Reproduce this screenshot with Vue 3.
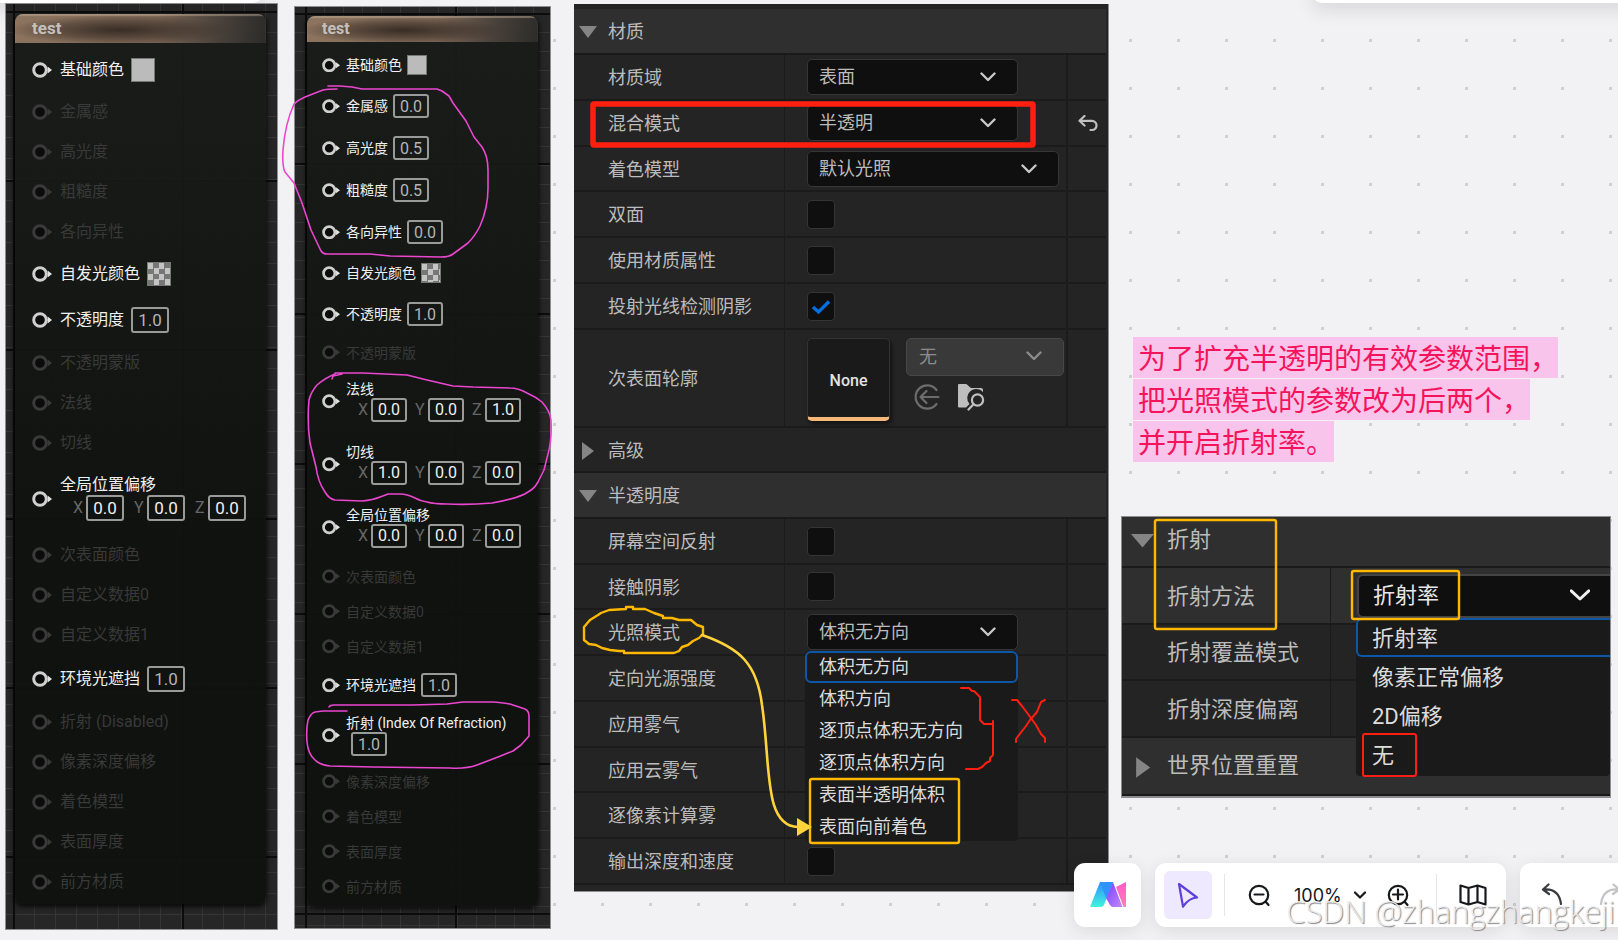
<script setup>
import { ref } from "vue";

const simpleNode = {
  id: "a",
  size: "large",
  title: "test",
  pins: [
    { label: "基础颜色", kind: "color", on: true },
    { label: "金属感" },
    { label: "高光度" },
    { label: "粗糙度" },
    { label: "各向异性" },
    { label: "自发光颜色", kind: "checker", on: true },
    { label: "不透明度", kind: "value", value: "1.0", on: true },
    { label: "不透明蒙版" },
    { label: "法线" },
    { label: "切线" },
    { label: "全局位置偏移", kind: "vector", value: ["0.0", "0.0", "0.0"], on: true },
    { label: "次表面颜色" },
    { label: "自定义数据0" },
    { label: "自定义数据1" },
    { label: "环境光遮挡", kind: "value", value: "1.0", on: true },
    { label: "折射 (Disabled)" },
    { label: "像素深度偏移" },
    { label: "着色模型" },
    { label: "表面厚度" },
    { label: "前方材质" },
  ],
};

const forwardNode = {
  id: "b",
  size: "small",
  title: "test",
  pins: [
    { label: "基础颜色", kind: "color", on: true },
    { label: "金属感", kind: "value", value: "0.0", on: true },
    { label: "高光度", kind: "value", value: "0.5", on: true },
    { label: "粗糙度", kind: "value", value: "0.5", on: true },
    { label: "各向异性", kind: "value", value: "0.0", on: true },
    { label: "自发光颜色", kind: "checker", on: true },
    { label: "不透明度", kind: "value", value: "1.0", on: true },
    { label: "不透明蒙版" },
    { label: "法线", kind: "vector", value: ["0.0", "0.0", "1.0"], on: true },
    { label: "切线", kind: "vector", value: ["1.0", "0.0", "0.0"], on: true },
    { label: "全局位置偏移", kind: "vector", value: ["0.0", "0.0", "0.0"], on: true },
    { label: "次表面颜色" },
    { label: "自定义数据0" },
    { label: "自定义数据1" },
    { label: "环境光遮挡", kind: "value", value: "1.0", on: true },
    { label: "折射 (Index Of Refraction)", kind: "stacked", value: "1.0", on: true },
    { label: "像素深度偏移" },
    { label: "着色模型" },
    { label: "表面厚度" },
    { label: "前方材质" },
  ],
};

const nodes = [simpleNode, forwardNode];
const axes = ["X", "Y", "Z"];

const materialRows = [
  { id: "domain", label: "材质域", select: "表面" },
  { id: "blend", label: "混合模式", select: "半透明", reset: true },
  { id: "shading", label: "着色模型", select: "默认光照", wide: true },
  { id: "twosided", label: "双面", check: true },
  { id: "attributes", label: "使用材质属性", check: true },
  { id: "rayshadow", label: "投射光线检测阴影", check: true, checked: true },
];

const lightingOptions = [
  "体积无方向",
  "体积方向",
  "逐顶点体积无方向",
  "逐顶点体积方向",
  "表面半透明体积",
  "表面向前着色",
];

const translucencyRows = [
  { id: "ssr", label: "屏幕空间反射", check: true },
  { id: "contact", label: "接触阴影", check: true },
  { id: "lighting", label: "光照模式", select: "体积无方向", options: lightingOptions },
  { id: "directional", label: "定向光源强度" },
  { id: "fog", label: "应用雾气" },
  { id: "cloudfog", label: "应用云雾气" },
  { id: "pixelfog", label: "逐像素计算雾" },
  { id: "velocity", label: "输出深度和速度", check: true },
];

const refractionOptions = ["折射率", "像素正常偏移", "2D偏移", "无"];

const noteLines = [
  "为了扩充半透明的有效参数范围，",
  "把光照模式的参数改为后两个，",
  "并开启折射率。",
];

const zoom = ref(100);
</script>

<template>
  <main class="canvas">
    <div class="sheet sheet--left"></div>
    <div class="sheet sheet--right"></div>

    <!-- Material graph nodes -->
    <section
      v-for="node in nodes"
      :key="node.id"
      class="graph"
      :class="`graph--${node.size}`"
    >
      <div class="node">
        <h2 class="node__title">{{ node.title }}</h2>
        <ul class="node__pins">
          <li
            v-for="(pin, i) in node.pins"
            :key="i"
            class="pin"
            :class="[{ 'pin--on': pin.on }, pin.kind ? `pin--${pin.kind}` : '']"
          >
            <svg class="pin__socket" viewBox="0 0 20 16">
              <circle cx="8" cy="8" r="6.3" />
              <path d="M15.6 4.6 L20 8 L15.6 11.4 Z" />
            </svg>
            <div class="pin__body">
              <label class="pin__label" :for="`${node.id}-${i}`">{{ pin.label }}</label>
              <button
                v-if="pin.kind === 'color' || pin.kind === 'checker'"
                :id="`${node.id}-${i}`"
                type="button"
                class="swatch"
                :class="{ 'swatch--checker': pin.kind === 'checker' }"
              ></button>
              <input
                v-else-if="pin.kind === 'value' || pin.kind === 'stacked'"
                :id="`${node.id}-${i}`"
                class="field"
                type="text"
                :value="pin.value"
              />
              <div v-else-if="pin.kind === 'vector'" class="vector">
                <label v-for="(v, n) in pin.value" :key="n" class="vector__axis">
                  <span>{{ axes[n] }}</span>
                  <input :id="n ? undefined : `${node.id}-${i}`" class="field" type="text" :value="v" />
                </label>
              </div>
            </div>
          </li>
        </ul>
      </div>
    </section>

    <!-- Details panel -->
    <section class="details">
      <button type="button" class="category">
        <svg class="arrow" viewBox="0 0 18 18"><path d="M0 3 H18 L9 15 Z" /></svg>
        <span>材质</span>
      </button>
      <div v-for="row in materialRows" :key="row.id" class="row">
        <label class="row__label" :for="row.id">{{ row.label }}</label>
        <div class="row__value">
          <span v-if="row.select" class="dropdown" :class="{ 'dropdown--wide': row.wide }">
            <select :id="row.id">
              <option>{{ row.select }}</option>
            </select>
            <svg class="chevron" viewBox="0 0 16 10"><path d="M1.5 1.5 L8 8 L14.5 1.5" /></svg>
          </span>
          <span v-else-if="row.check" class="check">
            <input :id="row.id" type="checkbox" :checked="row.checked" />
            <svg viewBox="0 0 20 16"><path d="M2 8 L7.5 13 L18 2.5" /></svg>
          </span>
        </div>
        <div class="row__reset">
          <button v-if="row.reset" type="button" class="icon-button" aria-label="重置">
            <svg width="20" height="17" viewBox="0 0 20 17">
              <path d="M6.5 1 L1.5 5.8 L6.5 10.5 M2 5.8 H14 A4.5 4.6 0 0 1 14 15 H12.5" />
            </svg>
          </button>
        </div>
      </div>

      <div class="row row--asset">
        <label class="row__label" for="profile">次表面轮廓</label>
        <div class="row__value asset">
          <div class="asset__thumb">None</div>
          <div class="asset__side">
            <span class="dropdown dropdown--off">
              <select id="profile" disabled>
                <option>无</option>
              </select>
              <svg class="chevron" viewBox="0 0 16 10"><path d="M1.5 1.5 L8 8 L14.5 1.5" /></svg>
            </span>
            <div class="asset__tools">
              <button type="button" class="icon-button" aria-label="使用">
                <svg class="asset__use" width="28" height="28" viewBox="0 0 28 28">
                  <path d="M23.5 7 A11.6 11.6 0 1 0 23.5 21 M8 14 H25.5 M13.5 8 L7.5 14 L13.5 20" />
                </svg>
              </button>
              <button type="button" class="icon-button" aria-label="浏览">
                <svg width="28" height="28" viewBox="0 0 28 28">
                  <path class="asset__folder" d="M1 2 Q1 1 2 1 H9 Q10 1 11 2.5 L14 5 H24 Q26 5 26 7 V9 A9 9 0 0 0 12.5 21 L9 24.5 H2 Q1 24.5 1 23.5 Z" />
                  <circle cx="20.5" cy="17" r="5.6" />
                  <path d="M16.5 21.2 L11.5 26.5" />
                </svg>
              </button>
            </div>
          </div>
        </div>
        <div class="row__reset"></div>
      </div>

      <button type="button" class="category category--plain">
        <svg class="arrow" viewBox="0 0 18 18"><path d="M3 0 L15 9 L3 18 Z" /></svg>
        <span>高级</span>
      </button>
      <button type="button" class="category">
        <svg class="arrow" viewBox="0 0 18 18"><path d="M0 3 H18 L9 15 Z" /></svg>
        <span>半透明度</span>
      </button>
      <div v-for="row in translucencyRows" :key="row.id" class="row">
        <label class="row__label" :for="row.id">{{ row.label }}</label>
        <div class="row__value">
          <span v-if="row.select" class="dropdown">
            <select :id="row.id">
              <option>{{ row.select }}</option>
            </select>
            <svg class="chevron" viewBox="0 0 16 10"><path d="M1.5 1.5 L8 8 L14.5 1.5" /></svg>
          </span>
          <span v-else-if="row.check" class="check">
            <input :id="row.id" type="checkbox" />
          </span>
          <ul v-if="row.options" class="menu" role="listbox">
            <li
              v-for="(option, n) in row.options"
              :key="option"
              role="option"
              :aria-selected="n === 0"
            >
              {{ option }}
            </li>
          </ul>
        </div>
        <div class="row__reset"></div>
      </div>
    </section>

    <!-- Note -->
    <p class="note">
      <span v-for="line in noteLines" :key="line">{{ line }}</span>
    </p>

    <!-- Refraction panel -->
    <section class="refraction">
      <button type="button" class="category">
        <svg class="arrow" viewBox="0 0 18 18"><path d="M0 4 H18 L9 14.5 Z" /></svg>
        <span>折射</span>
      </button>
      <div class="row row--hover">
        <label class="row__label" for="method">折射方法</label>
        <div class="row__value">
          <span class="dropdown">
            <select id="method">
              <option>折射率</option>
            </select>
            <svg class="chevron" viewBox="0 0 16 10"><path d="M1 1.5 L8 8 L15 1.5" /></svg>
          </span>
          <ul class="menu" role="listbox">
            <li
              v-for="(option, n) in refractionOptions"
              :key="option"
              role="option"
              :aria-selected="n === 0"
            >
              {{ option }}
            </li>
          </ul>
        </div>
      </div>
      <div class="row">
        <span class="row__label">折射覆盖模式</span>
        <div class="row__value"></div>
      </div>
      <div class="row">
        <span class="row__label">折射深度偏离</span>
        <div class="row__value"></div>
      </div>
      <button type="button" class="category category--closed">
        <svg class="arrow" viewBox="0 0 18 18"><path d="M4 1 L15 9 L4 17 Z" /></svg>
        <span>世界位置重置</span>
      </button>
    </section>

    <!-- Hand-drawn marks over the boards -->
    <svg class="marks" width="1618" height="940" viewBox="0 0 1618 940">
      <g class="marks__pink">
        <path d="M328 86 L340 86 L352 87 L362 89 H437 L442 91 L449 96 L453 103 L466 121 L474 137 L482 147 Q488 156 488 170 V188 Q488 208 480 226 Q475 236 468 243 L453 254 Q449 257 441 257 L390 256 L370 254 L327 254 Q323 254 321 251 L311 230 L302 203 L294 183 L285 172 Q282 166 283 150 Q285 124 294 104 Q298 100 305 97 L323 90 Q328 89 337 89" />
        <path d="M332 379 L333 376 L342 374 M335 373 L363 373 L407 375 L427 380 L453 386 L473 387 L510 388 Q518 388 527 393 Q536 397 542 402 Q550 411 551 420 Q552 440 548 454 L544 470 L538 482 Q534 489 528 492 Q520 498 492 503 Q470 505 447 504 Q434 504 427 502 Q420 501 415 498 Q407 494 400 494 H388 Q383 496 380 497 Q373 500 362 501 L335 500 Q329 499 325 492 Q318 482 316 467 L310 443 Q307 422 309 400 Q311 392 317 385 Q325 378 335 374" />
        <path d="M329 707 Q330 705 334 705 H413 L447 704 L463 702 H494 Q508 703 513 705 L525 709 Q529 711 529 716 V736 L521 745 L513 751 L498 757 L477 765 Q466 769 450 768 L373 767 L330 766 Q320 765 315 760 Q308 754 307 742 Q306 730 308 720 Q311 713 315 712 L323 711 H347" />
      </g>
      <rect class="marks__frame" x="593" y="104" width="440" height="41" rx="1" />
      <g class="marks__red">
        <path d="M961 688 H969 L972 691 H974 L980 697 V720 L984 724 H993 M993 721 V755 L990 758 V761 L986 763 L982 767 L978 769 H966" />
        <path d="M1012 700 H1017 L1022 706 L1028 714 L1036 725 L1041 734 L1045 738 V742 M1045 700 L1041 702 L1037 712 L1030 720 L1026 726 L1019 735 L1016 739 V742" />
        <rect x="1363" y="734" width="53" height="42" rx="2" />
      </g>
      <g class="marks__gold">
        <path d="M626 607 H633 V609 H645 L654 613 L663 616 V618 H672 L679 620 L691 620 L697 625 L703 627 V634 L699 638 L693 641 L688 645 L682 647 L679 651 L674 653 H624 V651 L619 651 L610 650 L602 648 L596 645 L589 644 L584 640 V627 L590 620 L598 615 L601 613 L609 610 L626 609 Z" />
        <rect x="810" y="779" width="149" height="64" rx="2" />
        <rect x="1155" y="520" width="121" height="109" rx="2" />
        <rect x="1352" y="571" width="107" height="48" rx="2" />
      </g>
      <path class="marks__link" d="M702 635 C740 648 757 664 762 705 C771 765 763 826 798 827" />
      <path class="marks__tip" d="M797 818 L812 827 L797 836 Z" />
    </svg>

    <!-- Bottom toolbar -->
    <nav class="toolbar">
      <button type="button" class="card card--logo" aria-label="AI">
        <svg width="36" height="26" viewBox="0 0 36 26">
          <defs>
            <linearGradient id="cyan" x1="0" y1="1" x2="0" y2="0">
              <stop offset="0" stop-color="#3ff5de" />
              <stop offset="1" stop-color="#2f8cff" />
            </linearGradient>
            <linearGradient id="violet" x1="0" y1="0" x2="1" y2="1">
              <stop offset="0" stop-color="#7a3cff" />
              <stop offset="1" stop-color="#c28bff" />
            </linearGradient>
            <linearGradient id="rose" x1="0" y1="0" x2="0" y2="1">
              <stop offset="0" stop-color="#ff5cc8" />
              <stop offset="1" stop-color="#ff7fb6" />
            </linearGradient>
          </defs>
          <path fill="url(#cyan)" d="M10 0 H23 L14 23 Q13 25 11 25 H0 Z" />
          <path fill="url(#violet)" d="M23 0 L32.5 25 H23 Q21 25 20 23 L16 16 Z" />
          <path fill="#2f93fb" d="M10 0 H23 L16 16 Z" />
          <path fill="url(#rose)" d="M26 5 L36 0 V25 H33.5 Z" />
        </svg>
      </button>
      <div class="card card--tools">
        <button type="button" class="tool tool--active" aria-label="选择">
          <svg width="22" height="26" viewBox="0 0 22 26">
            <path d="M2 2 L20 15.5 Q12 16 6 24.5 Z" />
          </svg>
        </button>
        <span class="divider"></span>
        <button type="button" class="tool" aria-label="缩小">
          <svg width="24" height="24" viewBox="0 0 24 24">
            <circle cx="12" cy="12" r="9.2" /><path d="M7.5 11.5 H16.5 M18.5 18.5 L21.5 22" />
          </svg>
        </button>
        <button type="button" class="zoom">
          {{ zoom }}%
          <svg width="12" height="8" viewBox="0 0 12 8"><path d="M1 1.5 L6 6.5 L11 1.5" /></svg>
        </button>
        <button type="button" class="tool" aria-label="放大">
          <svg width="24" height="24" viewBox="0 0 24 24">
            <circle cx="12" cy="12" r="9.2" /><path d="M7 11.5 H17 M12 6.5 V16.5 M18.5 18.5 L21.5 22" />
          </svg>
        </button>
        <span class="divider"></span>
        <button type="button" class="tool" aria-label="地图">
          <svg width="28" height="24" viewBox="0 0 28 24">
            <path d="M1.5 2.5 L9.5 5 L18.5 2.5 L26.5 5 V21.5 L18.5 19 L9.5 21.5 L1.5 19 Z M9.5 5 V21.5 M18.5 2.5 V19" />
          </svg>
        </button>
      </div>
      <div class="card card--history">
        <button type="button" class="tool tool--undo" aria-label="撤销">
          <svg width="24" height="24" viewBox="0 0 24 24">
            <path d="M7.5 1.5 L2 6.5 L8 11 M2.5 6.5 Q18 5 20 21" />
          </svg>
        </button>
        <button type="button" class="tool tool--redo" aria-label="重做">
          <svg width="24" height="24" viewBox="0 0 24 24">
            <path d="M16.5 1.5 L22 6.5 L16 11 M21.5 6.5 Q6 5 4 21" />
          </svg>
        </button>
      </div>
    </nav>

    <div class="watermark">CSDN @zhangzhangkeji</div>
  </main>
</template>

<style>
body {
  margin: 0;
  overflow: hidden;
}
</style>

<style scoped>
/* dot grid, one dot every 48px */
.canvas {
  position: relative;
  min-height: 100vh;
  overflow: hidden;
  background:
    linear-gradient(#f2f2f5 45px, transparent 45px) 0 -6px / 48px 48px,
    linear-gradient(90deg, #f2f2f5 45px, #cfcfd2 45px) 28px 0 / 48px 48px;
  font-family: Roboto, "Noto Sans CJK SC", sans-serif;
}

button,
select,
input {
  font: inherit;
  color: inherit;
}

button {
  padding: 0;
  border: 0;
  background: none;
}

ul {
  margin: 0;
  padding: 0;
  list-style: none;
}

svg {
  fill: none;
  stroke-linecap: round;
  stroke-linejoin: round;
}

.sheet {
  position: absolute;
  top: -20px;
  height: 23px;
  border-radius: 10px;
  background: #fff;
  box-shadow: 0 6px 20px rgba(0, 0, 0, 0.12);
}

.sheet--left {
  left: -20px;
  width: 283px;
}

.sheet--right {
  left: 1312px;
  right: -20px;
}

/* ---- graph nodes ---- */
.graph {
  position: absolute;
  box-sizing: border-box;
  background-color: #262626;
  background-image:
    linear-gradient(90deg, #0c0c0c 2px, transparent 2px),
    linear-gradient(#0c0c0c 2px, transparent 2px),
    linear-gradient(90deg, #353535 1px, transparent 1px),
    linear-gradient(#353535 1px, transparent 1px);
  background-position: 7px 0, 0 7px, 7px 0, 0 7px;
  background-size:
    var(--major) 100%,
    100% var(--major),
    var(--cell) 100%,
    100% var(--cell);
  box-shadow: 0 0 0 1px #8d8d90;
}

.graph--large {
  --cell: 21px;
  --major: 169px;
  --row: 40px;
  --value-row: 47px;
  --color-row: 44px;
  --vector-row: 72px;
  --stacked-row: 72px;
  --text: 16px;
  --line: 20px;
  --field-w: 38px;
  --field-h: 26px;
  --swatch: 24px;
  --socket: 20px;
  --axis-gap: 10px;
  --field-text: 17px;
  left: 6px;
  top: 4px;
  width: 271px;
  padding: 10px 11px 25px 9px;
}

.graph--small {
  --cell: 19px;
  --major: 150px;
  --row: 35px;
  --value-row: 42px;
  --color-row: 40px;
  --vector-row: 63px;
  --stacked-row: 58px;
  --text: 14px;
  --line: 18px;
  --field-w: 36px;
  --field-h: 24px;
  --swatch: 20px;
  --socket: 18px;
  --axis-gap: 8px;
  --field-text: 16px;
  left: 295px;
  top: 7px;
  width: 255px;
  padding: 9px 12px 22px 12px;
  background-position: 10px 0, 0 6px, 10px 0, 0 6px;
}

.node {
  overflow: hidden;
  border-radius: 8px;
  background: linear-gradient(rgba(26, 28, 26, 0.94), rgba(14, 17, 14, 0.95) 60%);
  box-shadow: 0 2px 5px 1px rgba(0, 0, 0, 0.75);
}

.node__title {
  box-sizing: border-box;
  height: 29px;
  margin: 0;
  padding-left: 17px;
  line-height: 28px;
  font-size: 17px;
  font-weight: 700;
  color: #c4c0bb;
  background:
    radial-gradient(ellipse 45% 50% at 42% 55%, rgba(48, 38, 31, 0.9), rgba(60, 48, 40, 0.5) 60%, transparent),
    linear-gradient(100deg, #8d745f 0%, #7d6756 55%, #4a423b 80%, #2b2b29 100%);
  box-shadow: inset 0 2px 1px rgba(200, 180, 160, 0.45);
}

.graph--small .node__title {
  height: 26px;
  padding-left: 15px;
  font-size: 16px;
  line-height: 25px;
}

.node__pins {
  padding: 5px 0 2px;
  font-size: var(--text);
  line-height: var(--line);
}

.graph--small .node__pins {
  padding-top: 3px;
}

.pin {
  display: flex;
  align-items: center;
  gap: 8px;
  height: var(--row);
  padding-left: 17px;
  color: #383938;
}

.graph--small .pin {
  padding-left: 15px;
  gap: 6px;
}

.pin--on {
  color: #f0f0f0;
}

.pin--color,
.pin--checker {
  height: var(--color-row);
}

.pin--value {
  height: var(--value-row);
}

.pin--vector {
  height: var(--vector-row);
}

.pin--stacked {
  height: var(--stacked-row);
}

.pin__socket {
  flex: none;
  width: var(--socket);
}

.pin__socket circle {
  fill: #0b0b0b;
  stroke: #3a3a3a;
  stroke-width: 3;
}

.pin__socket path {
  fill: #3a3a3a;
}

.pin--on .pin__socket circle {
  stroke: #cfcfcf;
}

.pin--on .pin__socket path {
  fill: #e4e4e4;
}

.pin__body {
  display: flex;
  align-items: center;
  gap: 7px;
  white-space: nowrap;
}

.graph--small .pin__body {
  gap: 5px;
}

.graph .pin--vector .pin__body,
.graph .pin--stacked .pin__body {
  flex-direction: column;
  align-items: flex-start;
  gap: 0;
}

.pin--vector .pin__body {
  padding-bottom: 2px;
}

.pin--stacked .field {
  margin-left: 5px;
}

.swatch {
  width: var(--swatch);
  height: var(--swatch);
  border: 1px solid #777;
  background: #bbb;
}

.swatch--checker {
  background: repeating-conic-gradient(#777 0 25%, #c4c4c4 0 50%) 0 0 / 11px 11px;
}

.field {
  box-sizing: border-box;
  width: var(--field-w);
  height: var(--field-h);
  padding: 0;
  border: 2px solid #9a9a9a;
  border-radius: 3px;
  background: transparent;
  text-align: center;
  font-size: var(--field-text);
  color: #b4b4b4;
}

.vector {
  display: flex;
  gap: var(--axis-gap);
  padding-left: 13px;
}

.graph--small .vector {
  padding-left: 12px;
}

.vector__axis {
  display: flex;
  align-items: center;
}

.vector__axis span {
  width: 13px;
  font-size: 16px;
  color: #666;
}

.vector .field {
  color: #f0f0f0;
}

/* ---- property panels ---- */
.details,
.refraction {
  position: absolute;
  box-sizing: border-box;
  background: #242424;
  color: #bcbcbc;
}

.details {
  left: 574px;
  top: 4px;
  width: 535px;
  padding: 5px 2px 6px 0;
  border-right: 1px solid #8d8d90;
  border-bottom: 1px solid #8d8d90;
  font-size: 18px;
}

.category {
  display: flex;
  align-items: center;
  gap: 11px;
  box-sizing: border-box;
  width: 100%;
  height: 46px;
  padding: 0 0 2px 5px;
  border-bottom: 2px solid #1a1a1a;
  background: #2f2f2f;
  text-align: left;
}

.category--plain {
  height: 45px;
  background: #242424;
}

.arrow {
  flex: none;
  width: 18px;
  margin-top: 4px;
}

.arrow path {
  fill: #858585;
}

.row {
  display: grid;
  grid-template-columns: 210px 1fr 40px;
  box-sizing: border-box;
  height: 46px;
  border-bottom: 2px solid #1b1b1b;
}

.row:nth-child(4n) {
  height: 45px;
}

.row.row--asset {
  height: 98px;
}

.row__label {
  align-self: center;
  padding: 0 0 2px 34px;
}

.row__value {
  position: relative;
  display: flex;
  align-items: center;
  padding-left: 22px;
  border-left: 1px solid #1b1b1b;
}

.row__reset {
  display: flex;
  align-items: center;
  justify-content: center;
  padding-left: 2px;
  border-left: 2px solid #1b1b1b;
}

.icon-button {
  display: flex;
  stroke: #c0c0c0;
  stroke-width: 2.2;
}

.dropdown {
  position: relative;
  display: flex;
  width: 211px;
}

.dropdown--wide {
  width: 252px;
}

.dropdown select {
  appearance: none;
  width: 100%;
  height: 36px;
  padding: 0 0 0 11px;
  border: 1px solid #363636;
  border-radius: 5px;
  background: #0f0f0f;
  line-height: 24px;
}

.chevron {
  position: absolute;
  right: 22px;
  top: 13px;
  width: 16px;
  stroke: #c8c8c8;
  stroke-width: 2.4;
  pointer-events: none;
}

.dropdown--off {
  width: 158px;
  color: #8c8c8c;
}

.dropdown--off select {
  height: 38px;
  padding-left: 12px;
  border-color: #484848;
  background: #393939;
  color: #8c8c8c;
  opacity: 1;
}

.dropdown--off .chevron {
  stroke: #8c8c8c;
}

.check {
  position: relative;
  display: flex;
}

.check input {
  appearance: none;
  box-sizing: border-box;
  width: 28px;
  height: 29px;
  margin: 0;
  border: 1px solid #343434;
  border-radius: 4px;
  background: #0f0f0f;
}

.check svg {
  display: none;
  position: absolute;
  left: 4px;
  top: 7px;
  width: 20px;
  stroke: #0070e0;
  stroke-width: 3.4;
  stroke-linecap: butt;
  stroke-linejoin: miter;
}

.check input:checked + svg {
  display: block;
}

.asset {
  align-items: flex-start;
  gap: 16px;
  padding-top: 8px;
}

.asset__thumb {
  box-sizing: border-box;
  display: flex;
  align-items: center;
  justify-content: center;
  width: 83px;
  height: 83px;
  padding-top: 4px;
  border: 1px solid #333;
  border-bottom: 4px solid #f5b878;
  border-radius: 5px;
  background: #1a1a1a;
  box-shadow: 2px 3px 4px rgba(0, 0, 0, 0.5);
  font-size: 16px;
  font-weight: 500;
  color: #e2e2e2;
}

.asset__side {
  display: flex;
  flex-direction: column;
  gap: 7px;
}

.asset__tools {
  display: flex;
  gap: 16px;
  padding-left: 7px;
}

.asset__use {
  stroke: #6c6c6c;
}

.asset__folder {
  fill: #bdbdbd;
  stroke: none;
}

.menu {
  position: absolute;
  left: 20px;
  top: 41px;
  z-index: 2;
  box-sizing: border-box;
  width: 213px;
  height: 190px;
  border-radius: 4px;
  background: #1a1a1a;
  color: #dcdcdc;
}

.menu li {
  box-sizing: border-box;
  height: 32px;
  padding-left: 12px;
  border: 2px solid transparent;
  border-radius: 6px;
  line-height: 28px;
}

.menu li[aria-selected="true"] {
  border-color: #0d57a8;
}

/* ---- refraction ---- */
.refraction {
  left: 1121px;
  top: 516px;
  right: 7px;
  overflow: hidden;
  border: 1px solid #8d8d90;
  border-bottom-width: 2px;
  font-size: 22px;
}

.refraction .category {
  align-items: flex-start;
  gap: 13px;
  height: 51px;
  padding: 7px 0 0 9px;
  line-height: 32px;
}

.refraction .category--closed {
  align-items: center;
  height: 58px;
  padding: 0 0 0 9px;
}

.refraction .arrow {
  width: 23px;
  margin-top: 5px;
}

.refraction .category--closed .arrow {
  margin-top: 2px;
}

.refraction .row {
  grid-template-columns: 208px 1fr;
  height: 57px;
}

.refraction .row:nth-child(3) {
  height: 56px;
}

.refraction .row--hover {
  background: #2f2f2f;
}

.refraction .row__label {
  padding: 0 0 4px 45px;
}

.refraction .row__value {
  padding-left: 26px;
}

.refraction .dropdown {
  width: 100%;
}

.refraction .dropdown select {
  height: 44px;
  padding-left: 14px;
  border: 2px solid #444;
  border-right: 0;
  border-radius: 6px 0 0 6px;
  color: #e8e8e8;
}

.refraction .chevron {
  right: 20px;
  top: 15px;
  width: 20px;
  stroke: #f0f0f0;
}

.refraction .menu {
  left: 25px;
  right: 0;
  top: 50px;
  width: auto;
  height: 158px;
}

.refraction .menu li {
  height: 39px;
  padding-left: 14px;
  line-height: 37px;
}

.refraction .menu li[aria-selected="true"] {
  border-right: 0;
  border-radius: 6px 0 0 6px;
}

/* ---- note ---- */
.note {
  position: absolute;
  left: 1133px;
  top: 337px;
  display: flex;
  flex-direction: column;
  align-items: flex-start;
  gap: 1px;
  margin: 0;
  font-size: 28px;
  line-height: 41px;
  font-family: "Noto Sans CJK SC", sans-serif;
  color: #f5145c;
}

.note span {
  padding-left: 5px;
  background: #f8c4ec;
}

/* ---- marks ---- */
.marks {
  position: absolute;
  left: 0;
  top: 0;
  z-index: 3;
  pointer-events: none;
}

.marks__pink {
  stroke: #ea46d0;
  stroke-width: 1.6;
}

.marks__frame {
  stroke: #ff1f10;
  stroke-width: 5.5;
}

.marks__red {
  stroke: #ff1f10;
  stroke-width: 2;
}

.marks__gold {
  stroke: #ffb800;
  stroke-width: 2.4;
}

.marks__link {
  stroke: #ffd43b;
  stroke-width: 2.6;
}

.marks__tip {
  fill: #ffd43b;
}

/* ---- toolbar ---- */
.toolbar {
  position: absolute;
  left: 1074px;
  right: 0;
  bottom: 13px;
  z-index: 4;
  display: flex;
  gap: 14px;
  stroke: #17181a;
  stroke-width: 2.2;
}

.card {
  display: flex;
  flex: none;
  align-items: center;
  box-sizing: border-box;
  height: 64px;
  border-radius: 11px;
  background: #fff;
  box-shadow: 0 4px 18px rgba(0, 0, 0, 0.1);
}

.card--logo {
  justify-content: center;
  width: 67px;
  stroke: none;
}

.card--tools {
  padding: 0 19px 0 9px;
}

.card--history {
  gap: 32px;
  padding: 0 60px 0 21px;
}

.tool {
  display: flex;
  align-items: center;
  justify-content: center;
}

.tool--active {
  width: 48px;
  height: 48px;
  border-radius: 6px;
  background: #eee9fe;
  stroke: #5f3fdc;
}

.tool--undo {
  stroke: #3a3b3e;
}

.tool--redo {
  stroke: #c4c4c6;
}

.divider {
  width: 1px;
  height: 42px;
  margin: 0 22px 0 12px;
  background: #e6e6e8;
}

.divider + .tool {
  margin-right: 23px;
}

.tool + .divider {
  margin-left: 12px;
}

.zoom {
  display: flex;
  align-items: center;
  gap: 12px;
  margin-right: 20px;
  font-family: Inter, sans-serif;
  font-size: 18px;
  color: #17181a;
}

.zoom + .tool {
  margin-right: 14px;
}

.divider + .tool:last-child {
  margin-right: 0;
}

.watermark {
  position: absolute;
  right: 3px;
  bottom: 8px;
  z-index: 5;
  font-family: "Open Sans", sans-serif;
  font-size: 31px;
  font-weight: 300;
  line-height: 42px;
  color: rgba(240, 240, 242, 0.9);
  text-shadow: 1px 1px 1px #858585;
  pointer-events: none;
}
</style>
